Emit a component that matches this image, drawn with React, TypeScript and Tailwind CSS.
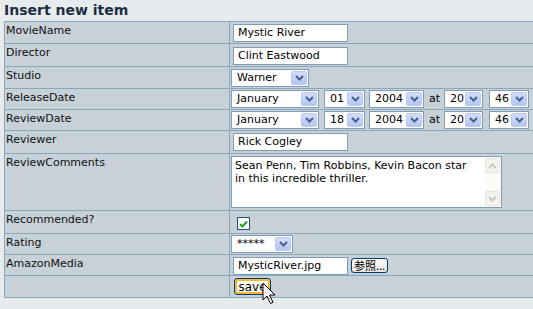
import type { ReactNode } from 'react';

/* ── XP-style form controls ─────────────────────────────────────────── */

const DropButton = () => (
  <div className="m-[1px] ml-0 w-[16px] shrink-0 rounded-[2px] border border-[#b9c9f1] bg-gradient-to-b from-[#d3ddfc] to-[#b3c6f5] flex items-center justify-center">
    <svg width="9" height="6" viewBox="0 0 9 6" aria-hidden="true">
      <path d="M1 1l3.5 3.5L8 1" fill="none" stroke="#4d6185" strokeWidth={2} />
    </svg>
  </div>
);

const Select = ({ value, w, className = '' }: { value: string; w: string; className?: string }) => (
  <div className={`flex h-[18px] shrink-0 border border-[#7f9db9] bg-white ${w} ${className}`}>
    <span className="flex-1 pl-[5px] leading-[16px] text-black">{value}</span>
    <DropButton />
  </div>
);

const TextBox = ({ value, className = '' }: { value: string; className?: string }) => (
  <div
    className={`flex h-[18px] w-[115px] shrink-0 items-center border border-[#7f9db9] bg-white pl-[4px] text-black ${className}`}
  >
    {value}
  </div>
);

const Row = ({ label, h, children }: { label?: string; h: string; children?: ReactNode }) => (
  <div className={`flex border-b border-[#8ba8b9] ${h}`}>
    <div className="w-[225px] shrink-0 border-r border-[#8ba8b9] pl-[1px] pt-[2px] leading-[13px] text-[#111]">
      {label}
    </div>
    <div className="flex flex-1 items-start">{children}</div>
  </div>
);

const DateRow = ({ day }: { day: string }) => (
  <div className="mt-[1px] ml-[1px] flex items-center">
    <Select value="January" w="w-[88px]" />
    <Select value={day} w="w-[41px]" className="ml-[5px]" />
    <Select value="2004" w="w-[55px]" className="ml-[4px]" />
    <span className="ml-[5px] mr-[4px] text-black">at</span>
    <Select value="20" w="w-[39px]" />
    <Select value="46" w="w-[40px]" className="ml-[6px]" />
  </div>
);

const ScrollArrow = ({ up }: { up?: boolean }) => (
  <div className="flex h-[15px] w-[15px] items-center justify-center rounded-[2px] border border-[#e6e4da] bg-[#f4f3ee]">
    <svg width="9" height="6" viewBox="0 0 9 6" aria-hidden="true">
      <path d={up ? 'M1 5l3.5-3.5L8 5' : 'M1 1l3.5 3.5L8 1'} fill="none" stroke="#c9c7ba" strokeWidth={2} />
    </svg>
  </div>
);

/* ── App ────────────────────────────────────────────────────────────── */

export default function App() {
  return (
    <div className="relative h-[309px] w-[533px] overflow-hidden bg-[#e8ebee] font-['DejaVu_Sans','Verdana',sans-serif] text-[11px]">
      <h1 className="h-[21px] pl-[4px] text-[14px] font-bold leading-[21px] text-[#1c2f43]">Insert new item</h1>

      <div className="ml-[4px] w-[560px] border-l border-t border-[#8ba8b9] bg-[#c8d0d8]">
        <Row label="MovieName" h="h-[22px]">
          <TextBox value="Mystic River" className="mt-[2px] ml-[3px]" />
        </Row>
        <Row label="Director" h="h-[23px]">
          <TextBox value="Clint Eastwood" className="mt-[3px] ml-[3px]" />
        </Row>
        <Row label="Studio" h="h-[22px]">
          <Select value="Warner" w="w-[78px]" className="mt-[2px] ml-[1px]" />
        </Row>
        <Row label="ReleaseDate" h="h-[21px]">
          <DateRow day="01" />
        </Row>
        <Row label="ReviewDate" h="h-[21px]">
          <DateRow day="18" />
        </Row>
        <Row label="Reviewer" h="h-[23px]">
          <TextBox value="Rick Cogley" className="mt-[2px] ml-[3px]" />
        </Row>
        <Row label="ReviewComments" h="h-[57px]">
          <div className="mt-[2px] ml-[1px] flex h-[52px] w-[271px] border border-[#7f9db9] bg-white">
            <div className="flex-1 pl-[3px] pt-[2px] leading-[13px] text-black">
              Sean Penn, Tim Robbins, Kevin Bacon star
              <br />
              in this incredible thriller.
            </div>
            <div className="flex w-[16px] flex-col justify-between bg-[#fbfbf8] py-[1px]">
              <ScrollArrow up />
              <ScrollArrow />
            </div>
          </div>
        </Row>
        <Row label="Recommended?" h="h-[23px]">
          <div className="mt-[6px] ml-[7px] flex h-[13px] w-[13px] items-center justify-center border border-[#1c5180] bg-white">
            <svg width="9" height="8" viewBox="0 0 9 8" aria-hidden="true">
              <path d="M1 4l2.5 2.5L8 1.5" fill="none" stroke="#21a121" strokeWidth={2} />
            </svg>
          </div>
        </Row>
        <Row label="Rating" h="h-[21px]">
          <Select value="*****" w="w-[62px]" className="mt-[1px] ml-[1px]" />
        </Row>
        <Row label="AmazonMedia" h="h-[21px]">
          <div className="mt-[2px] ml-[3px] flex items-start">
            <TextBox value="MysticRiver.jpg" className="h-[17px] w-[114px]" />
            <button
              type="button"
              className="ml-[3px] mt-[1px] flex h-[15px] w-[37px] items-center justify-center rounded-[3px] border border-[#003c74] bg-gradient-to-b from-[#ffffff] to-[#e3e2da] font-['Noto_Sans_CJK_JP',sans-serif] text-[11px] leading-none text-black"
            >
              参照...
            </button>
          </div>
        </Row>
        <Row h="h-[22px]">
          <button
            type="button"
            className="mt-[2px] ml-[4px] flex h-[17px] w-[37px] items-center justify-center rounded-[3px] border border-[#003c74] bg-[#fffcf0] text-[12px] leading-none text-black shadow-[inset_0_0_0_2px_#f8b640]"
          >
            save
          </button>
        </Row>
      </div>

      {/* mouse pointer */}
      <svg className="absolute left-[262px] top-[282px]" width="14" height="23" viewBox="0 0 14 23" aria-hidden="true">
        <path d="M1 1v17l4-4 3.5 7.5 2.5-1.2-3.5-7.3H13z" fill="#fff" stroke="#000" strokeWidth={1} strokeLinejoin="miter" />
      </svg>
    </div>
  );
}
